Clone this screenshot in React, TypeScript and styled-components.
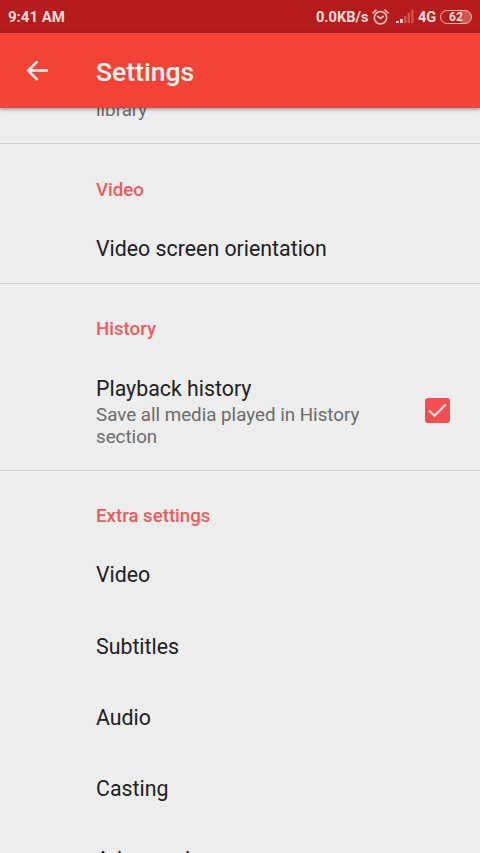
import React from "react";
import styled, { createGlobalStyle } from "styled-components";

const GlobalStyle = createGlobalStyle`
  *, *::before, *::after { box-sizing: border-box; }
  html, body { margin: 0; overflow: hidden; }
  body { background: #ededed; font-family: Roboto, "Liberation Sans", sans-serif; }
`;

const Screen = styled.div`
  width: 480px;
  height: 853px;
  display: flex;
  flex-direction: column;
  overflow: hidden;
  background: #ededed;
  color: #212121;
`;

const StatusBar = styled.div`
  flex: none;
  height: 33px;
  padding: 1px 8px 0;
  display: flex;
  align-items: center;
  justify-content: space-between;
  background: #b71c1c;
  color: #ffdcd8;
  font-size: 15px;
  font-weight: 700;
  white-space: nowrap;
`;

const StatusGroup = styled.div`
  display: flex;
  align-items: center;
`;

const StatusText = styled.span<{ $width: number }>`
  width: ${(p) => p.$width}px;
  font-size: 14.6px;
`;

const StatusIcon = styled.svg<{ $gap: number }>`
  display: block;
  flex: none;
  margin: 0 ${(p) => p.$gap}px 0 0;
`;

const Battery = styled.div`
  width: 32px;
  height: 14px;
  display: flex;
  align-items: center;
  justify-content: center;
  border: 1.5px solid #ffb9b3;
  border-radius: 7px;
  background: linear-gradient(90deg, #b71c1c 0 62%, #cf5552 62%);
  font-size: 12px;
  line-height: 12px;
`;

const Toolbar = styled.header`
  flex: none;
  position: relative;
  z-index: 1;
  height: 75px;
  padding-left: 24px;
  display: flex;
  align-items: center;
  background: #f44336;
  color: #fff;
  box-shadow: 0 1px 4px rgba(0, 0, 0, 0.45);
`;

const BackButton = styled.button`
  width: 28px;
  height: 28px;
  padding: 0;
  border: 0;
  margin: 0 44px 0 0;
  background: none;
  color: #fff1ef;
`;

const Title = styled.h1`
  margin: 3px 0 0;
  font-size: 26.5px;
  font-weight: 500;
  line-height: 32px;
  color: #fff4f2;
`;

const List = styled.main`
  flex: 1;
  min-height: 0;
  overflow: hidden;
`;

const Section = styled.section`
  border-top: 1px solid #cfcfcf;
`;

const Category = styled.h2`
  margin: 0;
  height: 67.5px;
  padding: 34.4px 0 0 96px;
  font-size: 18.67px;
  font-weight: 500;
  line-height: 22px;
  color: #f05a5c;
`;

const Item = styled.div<{ $height?: number }>`
  height: ${(p) => p.$height ?? 71.3}px;
  padding: 1.6px 30.5px 0 96px;
  display: flex;
  align-items: center;
  justify-content: space-between;
`;

const Label = styled.div`
  font-size: 21.33px;
  line-height: 25px;
`;

const Summary = styled.div`
  width: 290px;
  font-size: 18.75px;
  line-height: 22px;
  color: #6b6b6b;
`;

const ItemText = styled.div`
  display: flex;
  flex-direction: column;
  gap: 3px;
  padding-top: 1.6px;
`;

const Tail = styled.div`
  height: 35.2px;
  padding: 0 0 0 96px;
  display: flex;
  align-items: flex-start;
`;

const TailSummary = styled(Summary)`
  margin-top: -9px;
`;

const Checkbox = styled.span`
  width: 25px;
  height: 25px;
  flex: none;
  margin-top: -2px;
  border-radius: 3px;
  background: #f44e51;
`;

const extras = ["Video", "Subtitles", "Audio", "Casting", "Advanced"];

export default function App() {
  return (
    <Screen>
      <GlobalStyle />
      <StatusBar>
        <span>9:41 AM</span>
        <StatusGroup>
          <StatusText $width={56}>0.0KB/s</StatusText>
          <StatusIcon $gap={7} width="17" height="16" viewBox="0 0 17 16" fill="none" stroke="#ffc9c4" strokeWidth="1.6" strokeLinecap="round">
            <circle cx="8.5" cy="8.7" r="6.2" />
            <path d="M1 4 4 1.2M13 1.2 16 4M5.8 7.3 8.5 9.5l2.7-2.2" />
          </StatusIcon>
          <StatusIcon $gap={4} width="18" height="16" viewBox="0 0 18 16">
            <path d="M0 12h2.8v2H0zM4 10h2.8v4H4z" fill="#ffd6d2" />
            <path d="M8 7h2.4v7H8zM11.6 3.8H14V14h-2.4zM15.2 1h2.4V14h-2.4z" fill="#cf5552" />
          </StatusIcon>
          <StatusText $width={22}>4G</StatusText>
          <Battery>62</Battery>
        </StatusGroup>
      </StatusBar>
      <Toolbar>
        <BackButton aria-label="Back">
          <svg width="28" height="28" viewBox="0 0 28 28" fill="none" stroke="currentColor" strokeWidth="2.5">
            <path d="M24 13.6H5M13.5 4.3 4.2 13.6l9.3 9.3" />
          </svg>
        </BackButton>
        <Title>Settings</Title>
      </Toolbar>
      <List>
        <Tail>
          <TailSummary>library</TailSummary>
        </Tail>
        <Section>
          <Category>Video</Category>
          <Item>
            <Label>Video screen orientation</Label>
          </Item>
        </Section>
        <Section>
          <Category>History</Category>
          <Item $height={118.3}>
            <ItemText>
              <Label>Playback history</Label>
              <Summary>Save all media played in History section</Summary>
            </ItemText>
            <Checkbox role="checkbox" aria-checked="true" aria-label="Playback history">
              <svg width="25" height="25" viewBox="0 0 25 25" fill="none" stroke="#ffe3e2" strokeWidth="2.2">
                <path d="M4 12.5 9.5 17.7 21 6.2" />
              </svg>
            </Checkbox>
          </Item>
        </Section>
        <Section>
          <Category>Extra settings</Category>
          {extras.map((name) => (
            <Item key={name}>
              <Label>{name}</Label>
            </Item>
          ))}
        </Section>
      </List>
    </Screen>
  );
}
